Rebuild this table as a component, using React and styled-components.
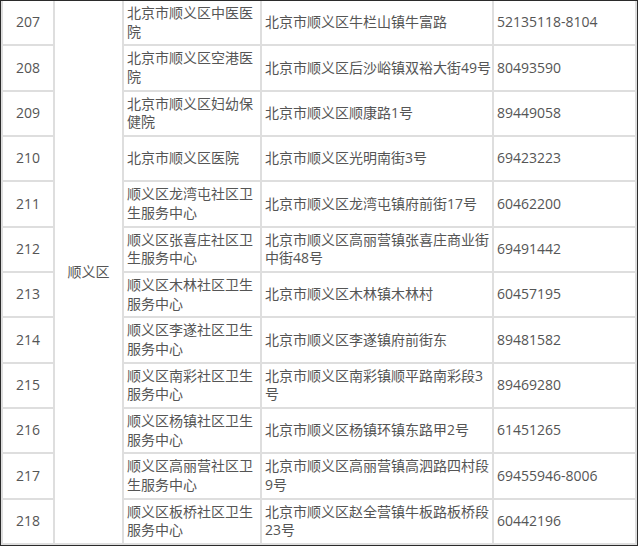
import React from 'react';
import styled, { createGlobalStyle } from 'styled-components';

const GlobalStyle = createGlobalStyle`
  html, body {
    margin: 0;
    padding: 0;
    background: #fff;
  }
`;

const Frame = styled.div`
  width: 636px;
  height: 544px;
  border: 1px solid #2b2b2b;
  overflow: hidden;
  background: #fff;
`;

const Grid = styled.div`
  display: grid;
  grid-template-columns: 50px 67px 136px 230px 141px;
  grid-template-rows: repeat(12, 1fr);
  gap: 2px;
  padding: 0 2px 2px 2px;
  height: 100%;
  box-sizing: border-box;
  background: #dedede;
  font-family: 'Open Sans', 'Noto Sans CJK SC', sans-serif;
  font-size: 14px;
  line-height: 18.5px;
  color: #555;
`;

const Cell = styled.div`
  background: #fff;
  display: flex;
  align-items: center;
  justify-content: ${p => (p.$center ? 'center' : 'flex-start')};
  text-align: ${p => (p.$center ? 'center' : 'left')};
  padding: ${p => (p.$center ? '0' : '0 0 0 3px')};
  grid-row: ${p => p.$span || 'auto'};
  min-width: 0;
  word-break: break-all;
`;

const Text = styled.span`
  display: block;
  width: 100%;
`;

const rows = [
  ['207', '北京市顺义区中医医院', '北京市顺义区牛栏山镇牛富路', '52135118-8104'],
  ['208', '北京市顺义区空港医院', '北京市顺义区后沙峪镇双裕大街49号', '80493590'],
  ['209', '北京市顺义区妇幼保健院', '北京市顺义区顺康路1号', '89449058'],
  ['210', '北京市顺义区医院', '北京市顺义区光明南街3号', '69423223'],
  ['211', '顺义区龙湾屯社区卫生服务中心', '北京市顺义区龙湾屯镇府前街17号', '60462200'],
  ['212', '顺义区张喜庄社区卫生服务中心', '北京市顺义区高丽营镇张喜庄商业街中街48号', '69491442'],
  ['213', '顺义区木林社区卫生服务中心', '北京市顺义区木林镇木林村', '60457195'],
  ['214', '顺义区李遂社区卫生服务中心', '北京市顺义区李遂镇府前街东', '89481582'],
  ['215', '顺义区南彩社区卫生服务中心', '北京市顺义区南彩镇顺平路南彩段3号', '89469280'],
  ['216', '顺义区杨镇社区卫生服务中心', '北京市顺义区杨镇环镇东路甲2号', '61451265'],
  ['217', '顺义区高丽营社区卫生服务中心', '北京市顺义区高丽营镇高泗路四村段9号', '69455946-8006'],
  ['218', '顺义区板桥社区卫生服务中心', '北京市顺义区赵全营镇牛板路板桥段23号', '60442196'],
];

export default function App() {
  return (
    <>
      <GlobalStyle />
      <Frame>
        <Grid>
          {rows.map(([no, name, addr, phone], i) => (
            <React.Fragment key={no}>
              <Cell $center style={{ gridColumn: 1, gridRow: i + 1 }}>{no}</Cell>
              {i === 0 && (
                <Cell $center $span="1 / span 12" style={{ gridColumn: 2 }}>
                  顺义区
                </Cell>
              )}
              <Cell style={{ gridColumn: 3, gridRow: i + 1 }}><Text>{name}</Text></Cell>
              <Cell style={{ gridColumn: 4, gridRow: i + 1 }}><Text>{addr}</Text></Cell>
              <Cell style={{ gridColumn: 5, gridRow: i + 1 }}><Text>{phone}</Text></Cell>
            </React.Fragment>
          ))}
        </Grid>
      </Frame>
    </>
  );
}
